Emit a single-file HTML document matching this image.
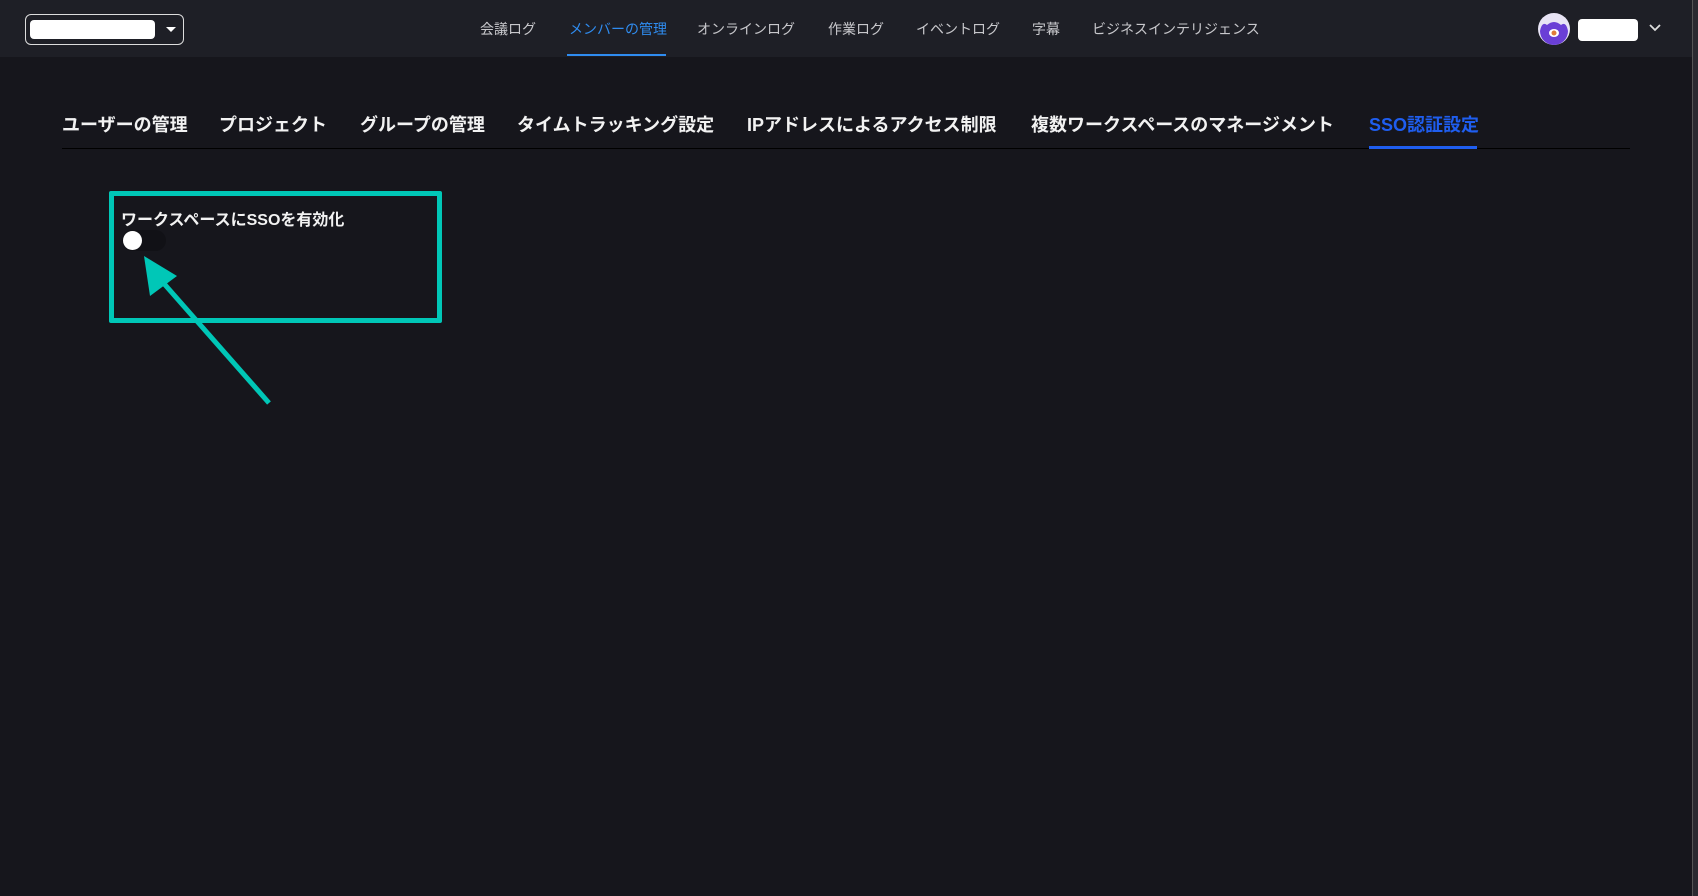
<!DOCTYPE html>
<html><head><meta charset="utf-8"><style>
body{margin:0;width:1698px;height:896px;background:#16161c;overflow:hidden;font-family:"Liberation Sans","Noto Sans CJK JP",sans-serif;position:relative}
.hdr{position:absolute;left:0;top:0;width:1692px;height:57px;background:#1e1f26}
.nav{position:absolute;top:19px;font-size:14px;color:#c8c8cc;white-space:nowrap}
.tab{position:absolute;top:111px;font-size:18px;font-weight:bold;color:#f2f2f2;white-space:nowrap}
</style></head><body>
<div class="hdr"></div>
<div style="position:absolute;left:1692px;top:0;width:6px;height:896px;background:#2a2a30;border-left:1px solid #555"></div>
<div style="position:absolute;left:25px;top:14px;width:157px;height:29px;border:1.5px solid #ddd;border-radius:6px"></div>
<div style="position:absolute;left:30px;top:20px;width:125px;height:19px;background:#fff;border-radius:4px"></div>
<div style="position:absolute;left:166px;top:27px;width:0;height:0;border-left:5px solid transparent;border-right:5px solid transparent;border-top:5px solid #fff"></div>
<div class="nav" style="left:480px">会議ログ</div>
<div class="nav" style="left:569px;color:#2f8cf0">メンバーの管理</div>
<div style="position:absolute;left:567px;top:54px;width:99px;height:2px;background:#2f8cf0"></div>
<div class="nav" style="left:697px">オンラインログ</div>
<div class="nav" style="left:828px">作業ログ</div>
<div class="nav" style="left:916px">イベントログ</div>
<div class="nav" style="left:1032px">字幕</div>
<div class="nav" style="left:1092px">ビジネスインテリジェンス</div>
<svg style="position:absolute;left:1538px;top:13px" width="32" height="32"><circle cx="16" cy="16" r="16" fill="#e8e4f5"/><path d="M2 18 Q4 8 9 12 Q16 6 23 12 Q28 8 30 18 A14 14 0 0 1 2 18Z" fill="#6a3fd6"/><ellipse cx="16" cy="20" rx="5" ry="4" fill="#fff"/><circle cx="16" cy="20" r="2.5" fill="#e07b3a"/></svg>
<div style="position:absolute;left:1578px;top:19px;width:60px;height:22px;background:#fff;border-radius:4px"></div>
<svg style="position:absolute;left:1648px;top:23px" width="14" height="10"><path d="M2 2 L7 7 L12 2" stroke="#ddd" stroke-width="1.8" fill="none"/></svg>
<div class="tab" style="left:62px">ユーザーの管理</div>
<div class="tab" style="left:219px">プロジェクト</div>
<div class="tab" style="left:360px">グループの管理</div>
<div class="tab" style="left:517px">タイムトラッキング設定</div>
<div class="tab" style="left:747px">IPアドレスによるアクセス制限</div>
<div class="tab" style="left:1031px">複数ワークスペースのマネージメント</div>
<div class="tab" style="left:1369px;color:#1f5ef0">SSO認証設定</div>
<div style="position:absolute;left:62px;top:148px;width:1568px;height:1px;background:#000"></div>
<div style="position:absolute;left:1369px;top:146px;width:108px;height:3px;background:#1f5ef0"></div>
<div style="position:absolute;left:109px;top:191px;width:323px;height:122px;border:5px solid #00c7b7;border-radius:2px"></div>
<div style="position:absolute;left:121px;top:206px;font-size:16px;font-weight:bold;color:#f2f2f2;white-space:nowrap">ワークスペースにSSOを有効化</div>
<div style="position:absolute;left:122px;top:230px;width:44px;height:21px;background:#111116;border-radius:11px"></div>
<div style="position:absolute;left:123px;top:231px;width:19px;height:19px;background:#fff;border-radius:50%"></div>
<svg style="position:absolute;left:0;top:0" width="400" height="420"><line x1="269" y1="403" x2="152" y2="270" stroke="#00c7b7" stroke-width="5"/><polygon points="144,256 177,276 150,296" fill="#00c7b7"/></svg>
</body></html>
